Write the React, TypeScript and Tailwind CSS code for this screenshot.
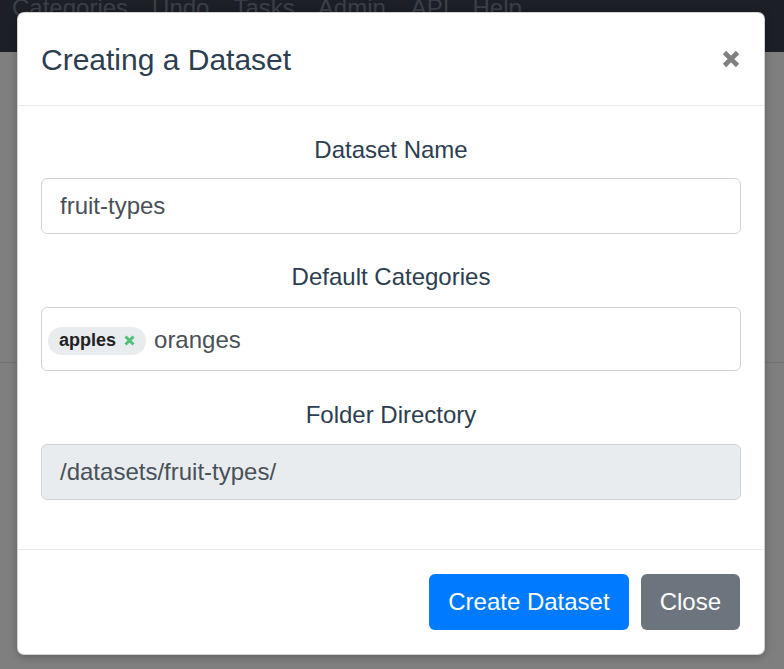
import React from "react";

export default function App() {
  const font = { fontFamily: '"Liberation Sans", Arial, sans-serif' };
  return (
    <div className="relative w-[784px] h-[669px] overflow-hidden bg-[#7f7f7f]" style={font}>
      {/* background page (dimmed) */}
      <div className="h-[56px] bg-[#1c1f26] flex items-start pl-[12px] text-[24px] leading-none text-[#3b4048] -mt-[4px]">
        <span>Categories</span>
        <span className="ml-[24px]">Undo</span>
        <span className="ml-[24px]">Tasks</span>
        <span className="ml-[23px]">Admin</span>
        <span className="ml-[25px]">API</span>
        <span className="ml-[23px]">Help</span>
      </div>
      <div className="h-[311px] border-b border-[#737373]" />

      {/* modal */}
      <div className="absolute left-[17px] top-[12px] w-[748px] bg-white rounded-[7px] border border-[#666]/30 shadow-[0_2px_8px_rgba(0,0,0,0.25)]">
        <div className="flex items-center justify-between px-[23px] h-[93px] border-b border-[#e9ecef]">
          <h5 className="text-[30px] leading-[45px] text-[#2c3e50]">Creating a Dataset</h5>
          <svg width="18" height="18" viewBox="0 0 18 18" className="mr-[1px]">
            <path d="M2.5 2.5 L15.5 15.5 M15.5 2.5 L2.5 15.5" stroke="#7f7f7f" strokeWidth="4.6" strokeLinecap="butt" />
          </svg>
        </div>
        <div className="px-[23px] pt-[26px] pb-[25px] text-center">
          <div className="text-[24px] leading-[36px] text-[#2c3e50] mb-[10px]">Dataset Name</div>
          <div className="h-[56px] border border-[#ced4da] rounded-[6px] px-[18px] flex items-center text-left text-[24px] text-[#495057]">
            fruit-types
          </div>
          <div className="text-[24px] leading-[36px] text-[#2c3e50] mt-[25px] mb-[12px]">Default Categories</div>
          <div className="h-[64px] border border-[#ced4da] rounded-[6px] pl-[6px] flex items-center text-left">
            <span className="h-[28px] mt-[3px] rounded-full bg-[#e9ecef] flex items-center pl-[11px] pr-[11px] text-[18px] font-bold text-[#222]">
              apples
              <svg width="11" height="11" viewBox="0 0 11 11" className="ml-[8px]">
                <path d="M1.5 1.5 L9.5 9.5 M9.5 1.5 L1.5 9.5" stroke="#4fc078" strokeWidth="3" />
              </svg>
            </span>
            <span className="ml-[8px] text-[24px] text-[#495057] mt-[2px]">oranges</span>
          </div>
          <div className="text-[24px] leading-[36px] text-[#2c3e50] mt-[26px] mb-[11px]">Folder Directory</div>
          <div className="h-[56px] border border-[#ced4da] bg-[#e9ecef] rounded-[6px] px-[18px] flex items-center text-left text-[24px] text-[#495057]">
            /datasets/fruit-types/
          </div>
          <div className="h-[24px]" />
        </div>
        <div className="border-t border-[#e9ecef] flex justify-end items-center px-[18px] pt-[24px] pb-[24px] gap-[12px]">
          <button className="h-[56px] px-[19px] rounded-[6px] bg-[#007bff] text-white text-[24px]">Create Dataset</button>
          <button className="h-[56px] px-[19px] rounded-[6px] bg-[#6c757d] text-white text-[24px] mr-[6px]">Close</button>
        </div>
      </div>
    </div>
  );
}
